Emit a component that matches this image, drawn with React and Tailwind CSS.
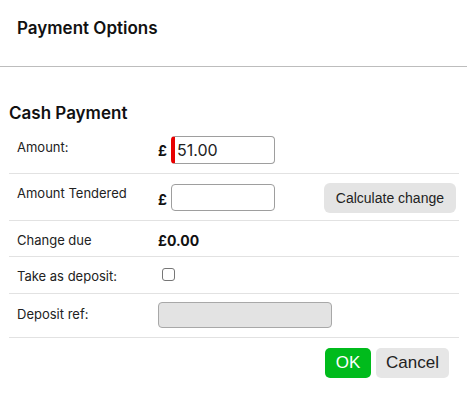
import React from 'react';

const label = "text-[13px] text-[#222] pl-2";

export default function App() {
  return (
    <div className="w-[467px] h-[396px] bg-white font-['Inter',sans-serif] text-[#111]">
      {/* Header */}
      <div className="h-[67px] border-b border-[#bdbdbd] flex items-center pl-[17px] pb-[10px]">
        <h2 className="text-[17px] font-semibold leading-none">Payment Options</h2>
      </div>

      <div className="px-[9px] pr-[8px]">
        <h3 className="text-[17px] font-semibold leading-none mt-[38px] mb-[5px]">Cash Payment</h3>

        {/* Amount */}
        <div className="flex h-[47px] border-b border-[#e2e2e2]">
          <div className={`${label} w-[141px] pt-[11px]`}>Amount:</div>
          <div className="flex items-center pl-2 pt-[9px] h-[37px]">
            <span className="text-[14px] font-bold w-[13px]">£</span>
            <div className="w-[104px] h-[28px] rounded-[4px] border border-[#9e9e9e] border-l-[4px] border-l-[#e80000] flex items-center pl-[2px] text-[16px] text-[#222]">
              51.00
            </div>
          </div>
        </div>

        {/* Amount Tendered */}
        <div className="flex h-[47px] border-b border-[#e2e2e2]">
          <div className={`${label} w-[141px] pt-[10px]`}>Amount Tendered</div>
          <div className="flex items-start pl-2 pt-[10px] flex-1">
            <span className="text-[14px] font-bold w-[13px] mt-[5px]">£</span>
            <input className="w-[104px] h-[27px] rounded-[4px] border border-[#9e9e9e] outline-none" />
            <div className="flex-1" />
            <button className="h-[30px] px-[12px] mt-[-1px] mr-[3px] rounded-[6px] bg-[#e4e4e4] text-[14px] text-[#222] font-['Liberation_Sans',sans-serif]">
              Calculate change
            </button>
          </div>
        </div>

        {/* Change due */}
        <div className="flex h-[36px] border-b border-[#e2e2e2]">
          <div className={`${label} w-[141px] pt-[10px]`}>Change due</div>
          <div className="pl-2 pt-[9px] text-[14px] font-bold">£0.00</div>
        </div>

        {/* Take as deposit */}
        <div className="flex h-[37px] border-b border-[#e2e2e2]">
          <div className={`${label} w-[141px] pt-[10px]`}>Take as deposit:</div>
          <div className="pl-[12px] pt-[11px]">
            <div className="w-[13px] h-[13px] rounded-[3px] border border-[#767676] bg-white" />
          </div>
        </div>

        {/* Deposit ref */}
        <div className="flex h-[44px] border-b border-[#e2e2e2]">
          <div className={`${label} w-[141px] pt-[11px]`}>Deposit ref:</div>
          <div className="pl-2 pt-[8px]">
            <div className="w-[174px] h-[26px] rounded-[4px] border border-[#a8a8a8] bg-[#e3e3e3]" />
          </div>
        </div>

        {/* Actions */}
        <div className="flex justify-end gap-[5px] pt-[10px] pr-[10px]">
          <button className="h-[30px] w-[46px] rounded-[5px] bg-[#00bb1c] text-white text-[17px] font-['Liberation_Sans',sans-serif]">
            OK
          </button>
          <button className="h-[30px] w-[73px] rounded-[5px] bg-[#e6e6e6] text-[#222] text-[17px] font-['Liberation_Sans',sans-serif]">
            Cancel
          </button>
        </div>
      </div>
    </div>
  );
}
